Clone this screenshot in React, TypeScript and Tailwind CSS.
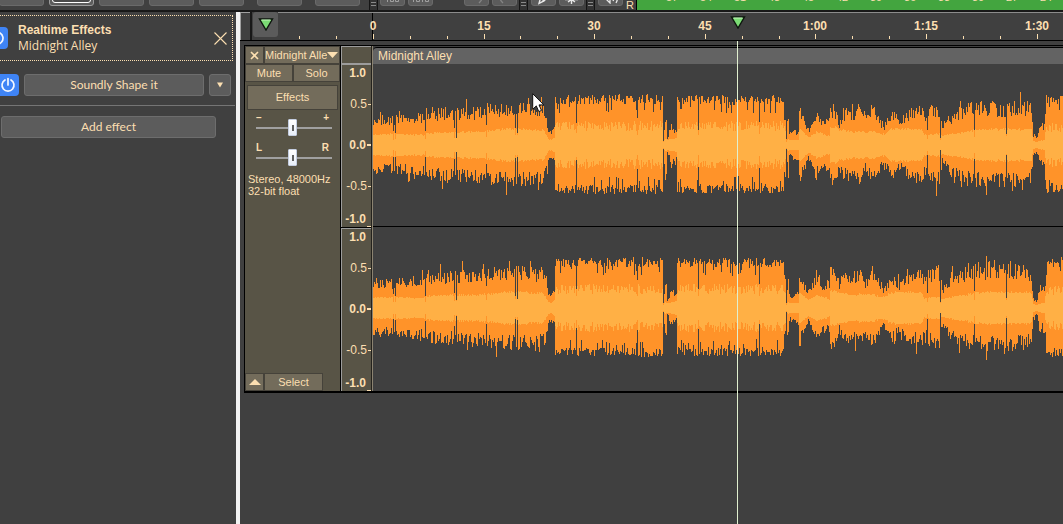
import React from "react";

const TEXT = "text-[#fcdfb1]";
const ARIAL = "font-['Liberation_Sans',sans-serif]";
const HUMANIST = "font-['Open_Sans',sans-serif]";

/* ---------- waveform data ---------- */

type Key = [x: number, peak: number, rms: number];

// Loudness envelope: horizontal offset, peak height, RMS height.
const ENVELOPE: Key[] = [
  [0, 31, 11], [20, 31, 11], [23, 31, 11], [50, 34, 10], [54, 38, 12], [78, 39, 13],
  [100, 40, 13], [112, 43, 14], [128, 44, 16], [146, 45, 17], [158, 42, 15], [170, 42, 15],
  [173, 34, 10], [175, 18, 6], [178, 16, 5], [181, 20, 8], [182, 48, 21], [289, 49, 21],
  [290, 5, 3], [291, 20, 5], [292, 37, 6], [293, 33, 6], [294, 8, 5], [298, 22, 6], [303, 16, 7],
  [304, 48, 21], [410, 48, 21], [412, 30, 14], [413, 6, 3], [414, 28, 5], [415, 36, 6],
  [416, 15, 5], [425, 17, 5], [426, 44, 16], [429, 34, 14], [435, 18, 8], [440, 28, 11],
  [443, 37, 13], [448, 27, 12], [456, 28, 9], [457, 44, 18], [462, 41, 18], [466, 27, 15],
  [470, 38, 15], [480, 38, 13], [486, 43, 14], [492, 29, 13], [499, 43, 14], [504, 34, 12],
  [511, 22, 11], [518, 40, 16], [526, 27, 16], [536, 38, 16], [548, 42, 16], [551, 34, 10],
  [555, 40, 10], [562, 45, 11], [566, 43, 11], [569, 22, 9], [580, 37, 12], [592, 42, 13],
  [600, 45, 15], [612, 45, 16], [625, 45, 16], [640, 45, 16], [654, 45, 16], [658, 38, 15],
  [660, 12, 4], [664, 8, 3], [666, 24, 4], [671, 22, 5], [673, 49, 19], [700, 49, 21],
];

// Very short drops, as offset: share of the envelope that is left.
const DROPS: Record<number, number> = {
  20: 0.5, 22: 0.45, 52: 0.5, 81: 0.5, 83: 0.25, 113: 0.55, 142: 0.35, 144: 0.3,
  203: 0.45, 264: 0.55, 325: 0.45, 386: 0.5, 554: 0.4, 567: 0.2, 601: 0.45, 633: 0.3,
};

function noise(seed: number) {
  let s = seed;
  return () => {
    s = (s * 1664525 + 1013904223) >>> 0;
    return s / 4294967296;
  };
}

function envelopeAt(x: number) {
  let i = 0;
  while (i < ENVELOPE.length - 2 && ENVELOPE[i + 1][0] <= x) i++;
  const [x0, p0, r0] = ENVELOPE[i];
  const [x1, p1, r1] = ENVELOPE[i + 1];
  const t = Math.min(1, (x - x0) / (x1 - x0));
  return { peak: p0 + (p1 - p0) * t, rms: r0 + (r1 - r0) * t };
}

function buildWave(seed: number) {
  const rnd = noise(seed);
  let peaks = "";
  let rms = "";
  for (let x = 0; x < 690; x++) {
    const env = envelopeAt(x);
    const drop = DROPS[x] ?? 1;
    const loud = env.peak > 46;
    const shape = () => {
      const r = rnd();
      const extra = rnd();
      if (loud) return (0.84 + 0.2 * r) * (extra < 0.1 ? 0.78 : 1);
      return (0.62 + 0.36 * r) * (extra > 0.9 ? 1.22 : 1);
    };
    const up = Math.max(2, Math.round(env.peak * shape() * drop));
    const down = Math.max(2, Math.round(env.peak * 0.97 * shape() * drop));
    const wobble = loud ? 0.66 + rnd() * 0.48 : 0.9 + rnd() * 0.16;
    const inner = Math.min(Math.round(env.rms * wobble * (drop < 1 ? 0.55 : 1)), up, down);
    peaks += `M${x} ${81 - up}h1v${up + down}h-1z`;
    rms += `M${x} ${81 - inner}h1v${inner * 2}h-1z`;
  }
  return { peaks, rms };
}

const WAVES = [buildWave(4711), buildWave(90210)];

function Wave({ channel }: { channel: number }) {
  const w = WAVES[channel];
  return (
    <svg width="690" height="162" viewBox="0 0 690 162" shapeRendering="crispEdges" className="block shrink-0" aria-hidden>
      <path d={w.peaks} fill="#ff9329" />
      <path d={w.rms} fill="#ffb045" />
    </svg>
  );
}

/* ---------- top toolbar ---------- */

function ToolButton({ label, wide, selected, children }: { label: string; wide?: boolean; selected?: boolean; children?: React.ReactNode }) {
  return (
    <button
      aria-label={label}
      className={`flex h-6 shrink-0 items-end justify-center rounded-[3px] border bg-[#5c5c5c] ${wide ? "w-[45px]" : "w-[25px]"} ${
        selected ? "border-[#9a9a9a] p-[2px]" : "border-[#6a6a6a]"
      }`}
    >
      {selected ? <span className="h-5 w-full rounded-[3px] border border-white bg-[#4a4a4a]" /> : children}
    </button>
  );
}

function Grip() {
  return (
    <span className="flex h-6 w-[9px] shrink-0 flex-col items-center justify-end gap-[2px] border-x border-[#151515] bg-[#333] pb-[4px]">
      <span className="h-px w-[5px] bg-[#8a8a8a]" />
      <span className="h-px w-[5px] bg-[#8a8a8a]" />
      <span className="h-px w-[5px] bg-[#8a8a8a]" />
    </span>
  );
}

const METER_MARKS = ["57", "54", "51", "48", "45", "42", "39", "36", "33", "30", "27", "24"];

function Toolbar() {
  return (
    <header className="flex h-3 items-end overflow-hidden border-b-2 border-[#181818] bg-[#404040]">
      <div className="-ml-px flex h-[10px] items-end gap-[5px] pb-1">
        <ToolButton label="Pause" wide />
        <ToolButton label="Play" wide selected />
        <ToolButton label="Stop" wide />
        <ToolButton label="Skip to start" wide />
        <ToolButton label="Skip to end" wide />
      </div>
      <div className="flex h-[10px] items-end gap-[13px] pr-[9px] pb-1 pl-[13px]">
        <ToolButton label="Record" wide />
        <ToolButton label="Loop" wide />
      </div>
      <Grip />
      <div className="flex h-[10px] items-end gap-[3px] px-[2px] pb-1">
        <ToolButton label="Trim">
          <svg width="13" height="7" viewBox="0 0 13 7" className="mb-[2px]" stroke="#a0a0a0" fill="none">
            <path d="M1.500 0V6M4.500 0V5.500H7.500V0M9.500 0V5.500H12.500V0" />
          </svg>
        </ToolButton>
        <ToolButton label="Silence">
          <svg width="17" height="7" viewBox="0 0 17 7" className="mb-[2px]" stroke="#a0a0a0" fill="none">
            <path d="M1.500 0V6M4.500 0V5.500H7.500V0M10.500 0V6M13.500 0V5.500H16.500V0" />
          </svg>
        </ToolButton>
      </div>
      <div className="flex h-[10px] items-end gap-[3px] pr-[2px] pb-1 pl-[29px]">
        <ToolButton label="Undo">
          <svg width="16" height="9" viewBox="0 0 16 9" className="mb-px" stroke="#858585" fill="none" strokeWidth="1.300">
            <path d="M1 1L4 4M7 1Q14 0 13 4Q12 6 10 8" />
          </svg>
        </ToolButton>
        <ToolButton label="Redo">
          <svg width="16" height="9" viewBox="0 0 16 9" className="mb-px" stroke="#858585" fill="none" strokeWidth="1.300">
            <path d="M15 1L12 4M9 1Q2 0 3 4Q4 6 6 8" />
          </svg>
        </ToolButton>
      </div>
      <Grip />
      <div className="flex h-[10px] items-end gap-[3px] pr-[2px] pb-1 pl-[3px]">
        <ToolButton label="Draw tool">
          <svg width="13" height="13" viewBox="0 0 13 13" stroke="#e8e8e8" fill="none" strokeWidth="1.400">
            <path d="M2 11.500L3.500 6L9 0.500L12 3.500L7 9ZM3.500 6L7 9" />
          </svg>
        </ToolButton>
        <ToolButton label="Multi tool">
          <svg width="17" height="13" viewBox="0 0 17 13" stroke="#e8e8e8" fill="none" strokeWidth="1.400">
            <path d="M8.500 0V12M2 7.500H15M5 10L12 5M12 10L5 5" />
          </svg>
        </ToolButton>
      </div>
      <Grip />
      <div className="flex h-[10px] items-end px-[3px] pb-1">
        <ToolButton label="Playback meter">
          <svg width="17" height="13" viewBox="0 0 17 13" className="mb-px" stroke="#e8e8e8" fill="none" strokeWidth="1.300">
            <path d="M1 5V8H4L8 12V1L4 5ZM11 4Q13 6.500 11 10M14 2Q17 6.500 14 12" />
          </svg>
        </ToolButton>
      </div>
      <span className={`w-[10px] shrink-0 text-[11px] leading-[10px] ${ARIAL} ${TEXT}`}>R</span>
      <div className="flex h-[10px] min-w-0 flex-1 items-end overflow-hidden border-l border-black bg-[#43a53f] pb-[7px] pl-[18px]">
        {METER_MARKS.map((m) => (
          <span key={m} className={`w-[34px] shrink-0 text-center text-[11px] leading-3 ${ARIAL} ${TEXT}`}>
            {m}
          </span>
        ))}
      </div>
    </header>
  );
}

/* ---------- realtime effects panel ---------- */

function PowerButton({ label, className }: { label: string; className: string }) {
  return (
    <button aria-label={label} className={`flex size-[22px] shrink-0 items-center justify-center rounded bg-[#3f84f5] ${className}`}>
      <svg width="16" height="16" viewBox="0 0 16 16" fill="none" stroke="#f4f8ff" strokeWidth="1.700" strokeLinecap="round">
        <path d="M8 1.500V8M5 3A6 6 0 1 0 11 3" />
      </svg>
    </button>
  );
}

const PANEL_BUTTON = `h-[22px] rounded-[3px] border border-[#6d6d6d] bg-[#5c5c5c] text-[12px] leading-5 font-['Lato',sans-serif] ${TEXT}`;

function EffectsPanel() {
  return (
    <aside className="w-[236px] shrink-0 overflow-hidden pt-[3px]">
      <div className="mr-[3px] flex h-[46px] items-center border-y border-r border-dotted border-[#fcdfb1]">
        <PowerButton label="Toggle all effects" className="-ml-[14px]" />
        <div className={`ml-[10px] flex-1 ${TEXT}`}>
          <h2 className={`text-[12px] leading-4 font-bold ${ARIAL}`}>Realtime Effects</h2>
          <p className={`text-[12px] leading-4 ${HUMANIST}`}>Midnight Alley</p>
        </div>
        <button aria-label="Close" className="mr-[5px]">
          <svg width="13" height="13" viewBox="0 0 13 13" stroke="#fcdfb1" strokeWidth="1.100" className="block">
            <path d="M0.500 0.500L12.500 12.500M12.500 0.500L0.500 12.500" />
          </svg>
        </button>
      </div>
      <div className="mr-[5px] flex items-center pt-[13px] pb-[9px]">
        <PowerButton label="Toggle Soundly Shape it" className="-ml-[3px]" />
        <button className={`ml-[5px] flex-1 ${PANEL_BUTTON}`}>Soundly Shape it</button>
        <button aria-label="Replace effect" className={`ml-[5px] flex w-[22px] items-center justify-center ${PANEL_BUTTON}`}>
          <svg width="6" height="6" viewBox="0 0 6 6">
            <path d="M0 0.500H6L3 5.500Z" fill="#fcdfb1" />
          </svg>
        </button>
      </div>
      <div className="mr-px h-px bg-[#757575]" />
      <button className={`mt-[10px] ml-px w-[215px] ${PANEL_BUTTON}`}>Add effect</button>
    </aside>
  );
}

/* ---------- timeline ---------- */

const PX_PER_MARK = 110.6;
const MARKS = ["0", "15", "30", "45", "1:00", "1:15", "1:30", "1:45", "2:00"];
const TICKS = Array.from({ length: 27 }, (_, i) => i - 2);

function Triangle() {
  return (
    <svg width="16" height="13" viewBox="0 0 16 13" className="block">
      <path d="M1.500 1H14.500L8 12Z" fill="#7bdc74" stroke="#0d160d" strokeWidth="1.400" />
      <path d="M3.500 2H12.500" stroke="#c9f5c0" />
    </svg>
  );
}

function Timeline() {
  return (
    <div className="flex h-[29px] border-b border-black bg-[#404040]">
      <div className="w-[10px] shrink-0 border-t border-l border-[#a0a0a0]" />
      <div className="flex w-[28px] shrink-0 items-start border-l-2 border-[#181818] pl-px">
        <button aria-label="Pin play head" className="flex h-[25px] w-[25px] items-center justify-center rounded-[3px] bg-[#5b5b5b]">
          <Triangle />
        </button>
      </div>
      <div className="relative min-w-0 flex-1 overflow-hidden border-t border-[#8c8c8c]">
        <svg className="absolute inset-0 size-full" shapeRendering="crispEdges" aria-hidden>
          {TICKS.map((t) => {
            const major = t % 3 === 0;
            return <rect key={t} x={Math.round(95 + (t * PX_PER_MARK) / 3)} y={major ? 21 : 23} width="1" height={major ? 5 : 3} fill="#fcdfb1" />;
          })}
          <rect x="94" y="0" width="1" height="27" fill="#000" />
        </svg>
        {MARKS.map((m, i) => (
          <span
            key={m}
            className={`absolute top-[5px] -translate-x-1/2 text-[12px] leading-4 font-bold ${ARIAL} ${TEXT}`}
            style={{ left: Math.round(95 + i * PX_PER_MARK) }}
          >
            {m}
          </span>
        ))}
      </div>
    </div>
  );
}

/* ---------- track ---------- */

const TRACK_BUTTON = `border border-[#45423a] bg-[#736c5b] text-[11px] ${ARIAL} ${TEXT}`;

function TrackSlider({ label, left, right }: { label: string; left: string; right: string }) {
  return (
    <label className={`block h-[30px] pr-2 pl-[11px] ${ARIAL} ${TEXT}`}>
      <span className="flex h-[10px] items-center justify-between pr-[3px] text-[10px] leading-[10px] font-bold">
        <span>{left}</span>
        <span>{right}</span>
      </span>
      <input
        type="range"
        aria-label={label}
        defaultValue={48}
        className="-mt-1 block h-[17px] w-full appearance-none bg-[linear-gradient(#a0a0a0,#a0a0a0)] bg-size-[100%_2px] bg-center bg-no-repeat [&::-webkit-slider-thumb]:h-[17px] [&::-webkit-slider-thumb]:w-[9px] [&::-webkit-slider-thumb]:appearance-none [&::-webkit-slider-thumb]:rounded-[1px] [&::-webkit-slider-thumb]:border [&::-webkit-slider-thumb]:border-[#c4cde0] [&::-webkit-slider-thumb]:bg-[linear-gradient(#606060,#606060),linear-gradient(#fff,#e8eef8)] [&::-webkit-slider-thumb]:bg-size-[2px_6px,100%_100%] [&::-webkit-slider-thumb]:bg-center [&::-webkit-slider-thumb]:bg-no-repeat"
      />
    </label>
  );
}

function TrackPanel() {
  return (
    <section className="flex w-[96px] shrink-0 flex-col border-r border-black bg-[#585446]">
      <div className="flex h-[18px]">
        <button aria-label="Close track" className={`flex w-[19px] items-center justify-center ${TRACK_BUTTON}`}>
          <svg width="9" height="9" viewBox="0 0 9 9" stroke="#fcdfb1" strokeWidth="1.600">
            <path d="M1 1L8 8M8 1L1 8" />
          </svg>
        </button>
        <button className={`flex min-w-0 flex-1 items-center justify-between ${TRACK_BUTTON}`}>
          <span className="overflow-hidden whitespace-nowrap">Midnight Alle</span>
          <svg width="11" height="6" viewBox="0 0 11 6" className="mr-px shrink-0">
            <path d="M0 0H11L5.500 6Z" fill="#fcdfb1" />
          </svg>
        </button>
      </div>
      <div className="flex h-[18px]">
        <button className={`w-12 ${TRACK_BUTTON} leading-4`}>Mute</button>
        <button className={`flex-1 ${TRACK_BUTTON} leading-4`}>Solo</button>
      </div>
      <button className={`mx-[2px] mt-[3px] mb-[3px] h-[25px] ${TRACK_BUTTON}`}>Effects</button>
      <TrackSlider label="Gain" left="–" right="+" />
      <TrackSlider label="Pan" left="L" right="R" />
      <p className={`pl-[3px] text-[11px] leading-3 whitespace-nowrap ${ARIAL} ${TEXT}`}>
        Stereo, 48000Hz
        <br />
        32-bit float
      </p>
      <div className="mt-auto flex h-[18px]">
        <button aria-label="Collapse track" className={`flex w-[19px] items-center justify-center ${TRACK_BUTTON}`}>
          <svg width="12" height="6" viewBox="0 0 12 6">
            <path d="M0 6H12L6 0Z" fill="#fcdfb1" />
          </svg>
        </button>
        <button className={`w-[59px] ${TRACK_BUTTON} leading-4`}>Select</button>
      </div>
    </section>
  );
}

function ScaleMark({ value, row, tick }: { value: string; row: string; tick: string }) {
  return (
    <div className={`flex items-center justify-end gap-px ${row}`}>
      <span>{value}</span>
      <span className={`bg-[#fcdfb1] ${tick}`} />
    </div>
  );
}

function ChannelScale() {
  return (
    <div className={`flex flex-1 flex-col border-t border-l border-[#9c9c9c] text-[12px] leading-4 ${ARIAL} ${TEXT}`}>
      <ScaleMark value="1.0" row="h-[15px] font-bold" tick="h-0 w-1" />
      <ScaleMark value="0.5" row="h-12" tick="h-px w-[3px]" />
      <ScaleMark value="0.0" row="h-[34px] font-bold" tick="h-[2px] w-1" />
      <ScaleMark value="-0.5" row="h-12" tick="h-px w-[3px]" />
      <ScaleMark value="-1.0" row="mt-auto h-4 font-bold" tick="h-px w-1 self-end" />
    </div>
  );
}

function Track() {
  return (
    <div className="mt-1 ml-1 flex h-[348px] border-t border-b-2 border-l border-black">
      <TrackPanel />
      <div className="flex w-[30px] shrink-0 flex-col bg-[#585446]">
        <div className="h-[18px] border-y border-l border-[#9c9c9c]" />
        <ChannelScale />
        <div className="h-px bg-black" />
        <ChannelScale />
      </div>
      <div className="w-px shrink-0 bg-[#24221d]" />
      <div className="flex min-w-0 flex-1 flex-col overflow-hidden border-l border-[#8b8371] bg-[#404040]">
        <div className={`mt-px h-[17px] shrink-0 rounded-tl border-t border-black bg-[#636363] pl-[5px] text-[12px] leading-4 ${ARIAL} ${TEXT}`}>Midnight Alley</div>
        <Wave channel={0} />
        <div className="h-px shrink-0 bg-black" />
        <Wave channel={1} />
      </div>
    </div>
  );
}

export default function App() {
  return (
    <div className="flex min-h-screen flex-col bg-[#404040]">
      <Toolbar />
      <div className="flex flex-1">
        <EffectsPanel />
        <div className="w-1 shrink-0 bg-[#f2f2f2]" />
        <main className="relative min-w-0 flex-1 overflow-hidden">
          <Timeline />
          <Track />
          <div className="absolute top-[29px] bottom-0 left-[497px] w-px bg-[#e0efcf]" />
          <div className="absolute top-1 left-[490px]">
            <Triangle />
          </div>
          <svg className="absolute top-[81px] left-[292px]" width="13" height="20" viewBox="0 0 13 20" aria-hidden>
            <path d="M0.700 0.700V16.300L4.300 12.900L6.800 18.600L9.500 17.400L7 11.900H11.800Z" fill="#fff" stroke="#111" />
          </svg>
        </main>
      </div>
    </div>
  );
}
